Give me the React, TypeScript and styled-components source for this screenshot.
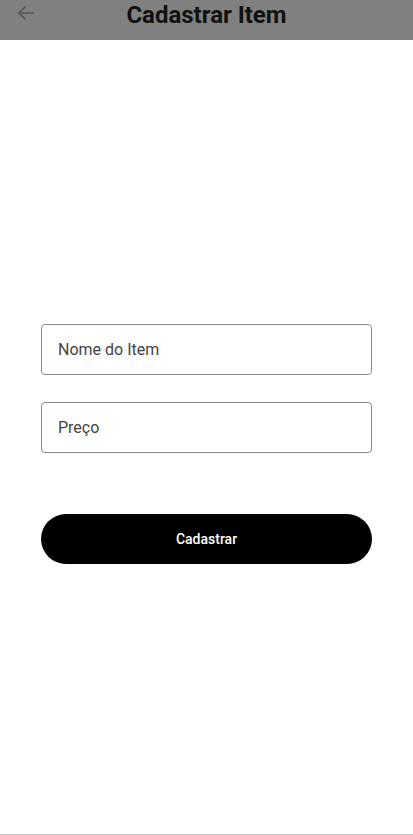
import React from "react";
import styled, { createGlobalStyle } from "styled-components";

const Global = createGlobalStyle`
  html, body { margin: 0; padding: 0; background: #fff; }
  body { font-family: Roboto, "Noto Sans", sans-serif; }
  * { box-sizing: border-box; }
`;

const Screen = styled.div`
  width: 413px;
  height: 835px;
  display: flex;
  flex-direction: column;
  border-bottom: 1px solid #c8c8c8;
`;

const Header = styled.header`
  height: 40px;
  background: #808080;
  display: grid;
  grid-template-columns: 52px 1fr 52px;
  align-items: start;
`;

const BackButton = styled.button`
  border: none;
  background: none;
  padding: 0;
  margin: 4px 0 0 16px;
  width: 20px;
  height: 18px;
  display: flex;
  align-items: center;
  justify-content: center;
  color: #56565e;
`;

const Title = styled.h1`
  margin: 0;
  padding-top: 1px;
  text-align: center;
  font-family: Roboto, sans-serif;
  font-weight: 700;
  font-size: 24px;
  line-height: 28px;
  color: #111;
`;

const Form = styled.form`
  display: flex;
  flex-direction: column;
  padding: 284px 41px 0 41px;
`;

const Field = styled.input<{ $gap: number }>`
  height: 51px;
  width: 100%;
  border: 1px solid #8a8a8a;
  border-radius: 4px;
  padding: 0 16px;
  font-family: Roboto, sans-serif;
  font-size: 16px;
  color: #444;
  background: #fff;
  outline: none;
  margin-bottom: ${(p) => p.$gap}px;
  &::placeholder { color: #444; }
`;

const Submit = styled.button`
  height: 50px;
  width: 100%;
  border: none;
  border-radius: 25px;
  background: #000;
  color: #fff;
  font-family: Roboto, sans-serif;
  font-weight: 500;
  font-size: 14px;
`;

export default function App() {
  return (
    <>
      <Global />
      <Screen>
        <Header>
          <BackButton aria-label="Voltar">
            <svg width="18" height="16" viewBox="0 0 18 16" fill="none" stroke="currentColor" strokeWidth="1.6">
              <path d="M17 8H2" />
              <path d="M8.5 1.5L2 8l6.5 6.5" />
            </svg>
          </BackButton>
          <Title>Cadastrar Item</Title>
          <div />
        </Header>
        <Form onSubmit={(e) => e.preventDefault()}>
          <Field $gap={27} placeholder="Nome do Item" />
          <Field $gap={61} placeholder="Preço" />
          <Submit type="submit">Cadastrar</Submit>
        </Form>
      </Screen>
    </>
  );
}
